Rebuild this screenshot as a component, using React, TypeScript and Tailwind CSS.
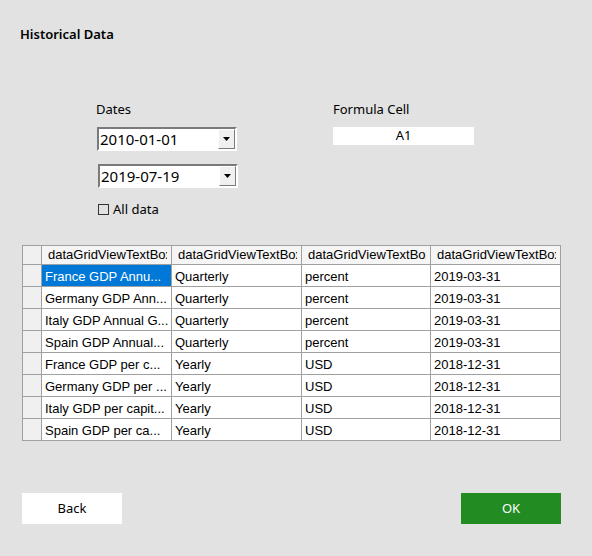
const ui = "font-['Noto_Sans',sans-serif]"
const grid = "font-['Liberation_Sans',Arial,sans-serif]"

const rows: [string, string, string, string][] = [
  ['France GDP Annu...', 'Quarterly', 'percent', '2019-03-31'],
  ['Germany GDP Ann...', 'Quarterly', 'percent', '2019-03-31'],
  ['Italy GDP Annual G...', 'Quarterly', 'percent', '2019-03-31'],
  ['Spain GDP Annual...', 'Quarterly', 'percent', '2019-03-31'],
  ['France GDP per c...', 'Yearly', 'USD', '2018-12-31'],
  ['Germany GDP per ...', 'Yearly', 'USD', '2018-12-31'],
  ['Italy GDP per capit...', 'Yearly', 'USD', '2018-12-31'],
  ['Spain GDP per ca...', 'Yearly', 'USD', '2018-12-31'],
]

function DateCombo({ value }: { value: string }) {
  return (
    <div className="flex h-[24px] w-[140px] border-2 border-t-[#7a7a7a] border-l-[#7a7a7a] border-b-white border-r-white bg-white">
      <div className={`flex flex-1 items-center pl-[1px] text-[15px] text-black ${ui}`}>{value}</div>
      <div className="flex w-[17px] items-center justify-center border border-t-white border-l-white border-b-[#7a7a7a] border-r-[#7a7a7a] bg-[#f0f0f0]">
        <svg width="7" height="4" viewBox="0 0 7 4">
          <path d="M0 0h7L3.5 4z" fill="#000" />
        </svg>
      </div>
    </div>
  )
}

export default function App() {
  return (
    <div className="flex h-[556px] w-[592px] flex-col bg-[#e2e2e2] text-black">
      <div className={`pl-[20px] pt-[25px] text-[13px] font-semibold leading-[18px] ${ui}`}>Historical Data</div>

      <div className="mt-[57px] flex">
        <div className="ml-[96px] flex w-[142px] flex-col">
          <div className={`h-[18px] text-[13px] leading-[18px] ${ui}`}>Dates</div>
          <div className="mt-[9px] pl-[1px]">
            <DateCombo value="2010-01-01" />
          </div>
          <div className="mt-[13px] pl-[2px]">
            <DateCombo value="2019-07-19" />
          </div>
          <div className="mt-[12px] flex items-center pl-[2px]">
            <div className="h-[11px] w-[11px] border border-[#333]" />
            <span className={`ml-[4px] text-[13px] leading-[18px] ${ui}`}>All data</span>
          </div>
        </div>
        <div className="ml-[95px] flex flex-col">
          <div className={`h-[18px] text-[13px] leading-[18px] ${ui}`}>Formula Cell</div>
          <div className={`mt-[9px] flex h-[18px] w-[141px] items-center justify-center bg-white text-[13px] ${ui}`}>A1</div>
        </div>
      </div>

      <div
        className={`ml-[22px] mt-[27px] grid w-[539px] grid-cols-[18px_129px_129px_128px_129px] grid-rows-[18px_repeat(8,21px)] gap-px bg-[#a0a0a0] p-px text-[13px] ${grid}`}
      >
        <div className="bg-[#f0f0f0]" />
        {[0, 1, 2, 3].map((i) => (
          <div key={i} className="flex items-center bg-[#f5f5f5] pl-[6px] pr-[4px]">
            <span className="overflow-hidden whitespace-nowrap">dataGridViewTextBoxColumn{i + 1}</span>
          </div>
        ))}
        {rows.map((r, ri) => (
          <div key={ri} className="contents">
            <div className="bg-[#f0f0f0]" />
            {r.map((c, ci) => (
              <div
                key={ci}
                className={`flex items-center overflow-hidden whitespace-nowrap pl-[3px] pt-[3px] ${
                  ri === 0 && ci === 0 ? 'bg-[#0078d7] text-white' : 'bg-white'
                }`}
              >
                {c}
              </div>
            ))}
          </div>
        ))}
      </div>

      <div className="mt-[52px] flex justify-between px-[22px]">
        <button className={`h-[31px] w-[100px] bg-white text-[13px] ${ui}`}>Back</button>
        <button className={`mr-[9px] h-[31px] w-[100px] bg-[#228b22] text-[13px] text-white ${ui}`}>OK</button>
      </div>
    </div>
  )
}
